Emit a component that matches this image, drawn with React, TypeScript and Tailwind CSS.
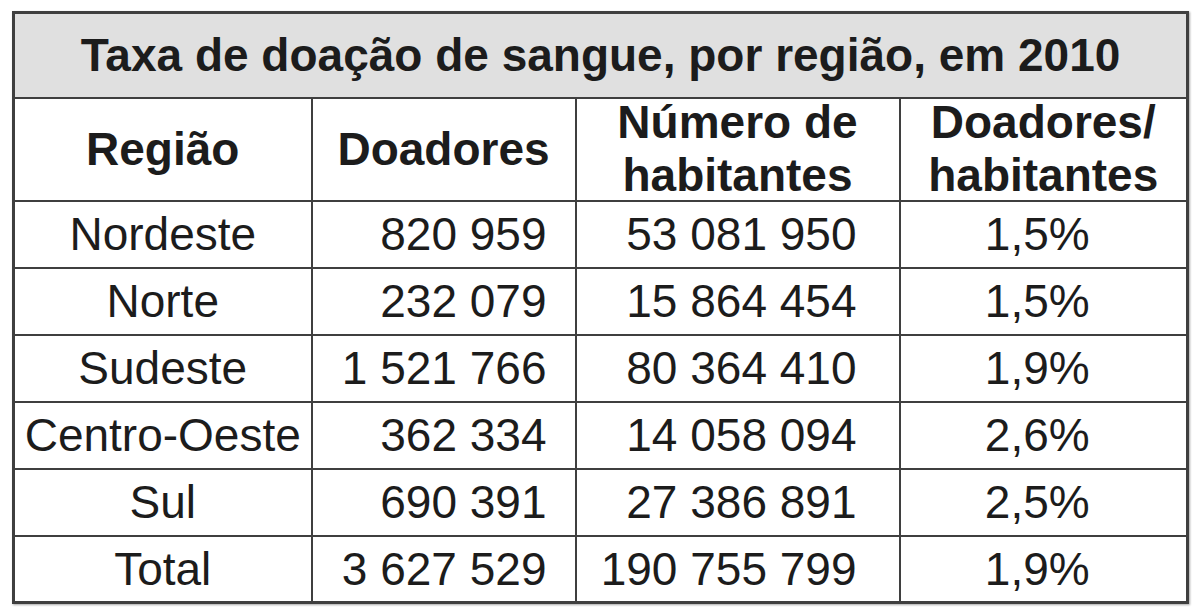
const rows = [
  { regiao: "Nordeste", doadores: "820 959", habitantes: "53 081 950", taxa: "1,5%" },
  { regiao: "Norte", doadores: "232 079", habitantes: "15 864 454", taxa: "1,5%" },
  { regiao: "Sudeste", doadores: "1 521 766", habitantes: "80 364 410", taxa: "1,9%" },
  { regiao: "Centro-Oeste", doadores: "362 334", habitantes: "14 058 094", taxa: "2,6%" },
  { regiao: "Sul", doadores: "690 391", habitantes: "27 386 891", taxa: "2,5%" },
  { regiao: "Total", doadores: "3 627 529", habitantes: "190 755 799", taxa: "1,9%" },
];

const cell = "border-2 border-[#3f3f3f] p-0 align-middle";

export default function App() {
  return (
    <div className="min-h-screen bg-white pl-[12px] pt-[11px] text-[#1c1c1c] font-['Liberation_Sans',Arial,sans-serif]">
      <table className="table-fixed border-collapse w-[1174px] border-[3px] border-[#3f3f3f] shadow-[1px_1px_2px_rgba(0,0,0,0.35)] text-[46px]">
        <colgroup>
          <col className="w-[298px]" />
          <col className="w-[264px]" />
          <col className="w-[324px]" />
          <col className="w-[288px]" />
        </colgroup>
        <thead>
          <tr className="h-[85px] bg-[#e0e0e0]">
            <th colSpan={4} className={`${cell} font-bold text-center leading-none`}>
              Taxa de doação de sangue, por região, em 2010
            </th>
          </tr>
          <tr className="h-[103px] font-bold">
            <th className={`${cell} text-center leading-none`}>Região</th>
            <th className={`${cell} text-center leading-none`}>Doadores</th>
            <th className={`${cell} text-center`}>
              <div className="leading-[53px] -my-[3px]">
                Número de
                <br />
                habitantes
              </div>
            </th>
            <th className={`${cell} text-center`}>
              <div className="leading-[53px] -my-[3px]">
                Doadores/
                <br />
                habitantes
              </div>
            </th>
          </tr>
        </thead>
        <tbody className="leading-none">
          {rows.map((r) => (
            <tr key={r.regiao} className="h-[67px]">
              <td className={`${cell} text-center`}>{r.regiao}</td>
              <td className={`${cell} text-right pr-[28px]`}>{r.doadores}</td>
              <td className={`${cell} text-right pr-[42px]`}>{r.habitantes}</td>
              <td className={`${cell} text-center pr-[12px]`}>{r.taxa}</td>
            </tr>
          ))}
        </tbody>
      </table>
    </div>
  );
}
